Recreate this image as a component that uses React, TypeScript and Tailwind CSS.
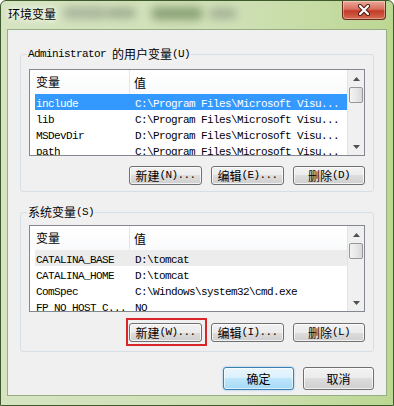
import React from "react";

const MONO = "font-['Liberation_Mono','Noto_Sans_CJK_SC',monospace] text-[11px] tracking-[-0.6px]";
const CJK = "font-['Noto_Sans_CJK_SC',sans-serif] text-[12px]";

function M({ children }: { children: React.ReactNode }) {
  return <span className={MONO}>{children}</span>;
}
function C({ children }: { children: React.ReactNode }) {
  return <span className={CJK}>{children}</span>;
}

function WinButton({
  cjk,
  rest,
  w,
  h,
  primary,
  highlight,
}: {
  cjk: string;
  rest?: string;
  w: number;
  h: number;
  primary?: boolean;
  highlight?: boolean;
}) {
  return (
    <button
      style={{ width: w, height: h }}
      className={
        "relative flex shrink-0 items-center justify-center rounded-[3px] border leading-none text-black " +
        (primary
          ? "border-[#3c7fb1] bg-[linear-gradient(to_bottom,#eaf6fd_0%,#d9f0fc_50%,#bee6fd_50%,#a7d9f5_100%)] shadow-[inset_0_0_0_1px_rgba(255,255,255,0.6),0_0_2px_#6fb6e6]"
          : "border-[#707070] bg-[linear-gradient(to_bottom,#f2f2f2_0%,#ebebeb_50%,#dddddd_50%,#cfcfcf_100%)] shadow-[inset_0_0_0_1px_rgba(255,255,255,0.7)]")
      }
    >
      <C>{cjk}</C>
      {rest ? <M>{rest}</M> : null}
      {highlight ? (
        <span className="pointer-events-none absolute left-[-4px] right-[-6px] top-[-6px] bottom-[-5px] border-2 border-[#d9262b]" />
      ) : null}
    </button>
  );
}

function ScrollBar() {
  return (
    <div className="flex w-[17px] shrink-0 flex-col border-l border-[#e3e3e3] bg-[#f0f0f0]">
      <div className="flex h-[17px] items-center justify-center">
        <svg width="7" height="4" viewBox="0 0 7 4">
          <path d="M0 4 L3.5 0 L7 4 Z" fill="#505050" />
        </svg>
      </div>
      <div className="mx-[1px] h-[16px] rounded-[2px] border border-[#979797] bg-[linear-gradient(to_right,#f3f3f3,#e8e8e8_50%,#d8d8d8)]" />
      <div className="flex-1" />
      <div className="flex h-[17px] items-center justify-center">
        <svg width="7" height="4" viewBox="0 0 7 4">
          <path d="M0 0 L7 0 L3.5 4 Z" fill="#505050" />
        </svg>
      </div>
    </div>
  );
}

type Row = { name: string; value: string; sel?: "blue" | "grey" };

function ListView({ rows }: { rows: Row[] }) {
  return (
    <div className="flex h-[87px] border border-[#828790] bg-white">
      <div className="flex min-w-0 flex-1 flex-col overflow-hidden">
        <div className="flex h-[24px] shrink-0 items-center bg-[linear-gradient(to_bottom,#ffffff,#f9fafb)] leading-[16px]">
          <div className="flex h-full w-[100px] items-center border-r border-[#e5e5e5] pl-[6px]">
            <C>变量</C>
          </div>
          <div className="pl-[4px]">
            <C>值</C>
          </div>
        </div>
        {rows.map((r) => (
          <div
            key={r.name}
            className={
              "ml-[5px] flex h-[16px] shrink-0 items-center leading-[16px] " +
              (r.sel === "blue"
                ? "bg-[#3399ff] text-white"
                : r.sel === "grey"
                ? "bg-[#ececec] text-black"
                : "text-black")
            }
          >
            <div className="w-[100px] shrink-0 overflow-hidden whitespace-nowrap pl-[1px]">
              <M>{r.name}</M>
            </div>
            <div className="whitespace-nowrap">
              <M>{r.value}</M>
            </div>
          </div>
        ))}
      </div>
      <ScrollBar />
    </div>
  );
}

export default function App() {
  const userRows: Row[] = [
    { name: "include", value: "C:\\Program Files\\Microsoft Visu...", sel: "blue" },
    { name: "lib", value: "C:\\Program Files\\Microsoft Visu..." },
    { name: "MSDevDir", value: "D:\\Program Files\\Microsoft Visu..." },
    { name: "path", value: "C:\\Program Files\\Microsoft Visu..." },
  ];
  const sysRows: Row[] = [
    { name: "CATALINA_BASE", value: "D:\\tomcat", sel: "grey" },
    { name: "CATALINA_HOME", value: "D:\\tomcat" },
    { name: "ComSpec", value: "C:\\Windows\\system32\\cmd.exe" },
    { name: "FP_NO_HOST_C...", value: "NO" },
  ];

  return (
    <div className="flex h-[406px] w-[394px] flex-col overflow-hidden rounded-t-[6px] border border-[#3e5a2c] bg-[linear-gradient(to_right,#d6e4c2,#cfe0b5_60%,#bcd792)]">
      {/* Title bar */}
      <div className="relative flex h-[28px] shrink-0 items-start">
        <span className="pointer-events-none absolute left-[62px] top-[6px] h-[12px] w-[44px] rounded-full bg-[#8f9a88] opacity-60 blur-[4px]" />
        <span className="pointer-events-none absolute left-[105px] top-[7px] h-[10px] w-[30px] rounded-full bg-[#7d8a76] opacity-60 blur-[4px]" />
        <span className="pointer-events-none absolute left-[150px] top-[6px] h-[13px] w-[52px] rounded-full bg-[#5f7a4e] opacity-60 blur-[4px]" />
        <span className="pointer-events-none absolute left-[208px] top-[7px] h-[11px] w-[28px] rounded-full bg-[#8c9686] opacity-60 blur-[4px]" />
        <div className="relative ml-[7px] mt-[5px] font-['Noto_Sans_CJK_SC',sans-serif] text-[12px] leading-[16px] text-black [text-shadow:0_0_5px_#fff,0_0_8px_#fff]">
          环境变量
        </div>
        <div className="relative ml-auto mr-[7px] flex h-[19px] w-[44px] items-center justify-center rounded-b-[4px] border border-t-0 border-[#6b2a20] bg-[linear-gradient(to_bottom,#e9a99b_0%,#d9705e_45%,#c33b28_55%,#d46a4f_100%)] shadow-[inset_0_0_0_1px_rgba(255,255,255,0.35)]">
          <svg width="14" height="12" viewBox="0 0 14 12">
            <path d="M3 2 L11 10 M11 2 L3 10" stroke="#4a1a12" strokeWidth="4" strokeLinecap="round" />
            <path d="M3 2 L11 10 M11 2 L3 10" stroke="#ffffff" strokeWidth="2.2" strokeLinecap="round" />
          </svg>
        </div>
      </div>

      {/* Client area */}
      <div className="mx-[6px] flex h-[367px] shrink-0 flex-col border border-[#97ad84] bg-[#f0f0f0] px-[12px] pt-[17px]">
        <fieldset className="rounded-[3px] border border-[#d5dfe5] pb-[6px] pl-[8px] pr-[8px] pt-[8px]">
          <legend className="-ml-[2px] flex h-[14px] items-center overflow-visible px-[1px] leading-[14px] text-black">
            <M>Administrator&nbsp;</M>
            <C>的用户变量</C>
            <M>(U)</M>
          </legend>
          <ListView rows={userRows} />
          <div className="mt-[10px] flex justify-end gap-[9px]">
            <WinButton cjk="新建" rest="(N)..." w={73} h={19} />
            <WinButton cjk="编辑" rest="(E)..." w={73} h={19} />
            <WinButton cjk="删除" rest="(D)" w={72} h={19} />
          </div>
        </fieldset>

        <fieldset className="mt-[13px] rounded-[3px] border border-[#d5dfe5] pb-[9px] pl-[8px] pr-[8px] pt-[6px]">
          <legend className="-ml-[2px] flex h-[14px] items-center overflow-visible px-[1px] leading-[14px] text-black">
            <C>系统变量</C>
            <M>(S)</M>
          </legend>
          <ListView rows={sysRows} />
          <div className="mt-[11px] flex justify-end gap-[9px]">
            <WinButton cjk="新建" rest="(W)..." w={73} h={19} highlight />
            <WinButton cjk="编辑" rest="(I)..." w={73} h={19} />
            <WinButton cjk="删除" rest="(L)" w={72} h={19} />
          </div>
        </fieldset>

        <div className="mt-[15px] flex justify-end gap-[9px]">
          <WinButton cjk="确定" w={71} h={23} primary />
          <WinButton cjk="取消" w={71} h={23} />
        </div>
      </div>
    </div>
  );
}
